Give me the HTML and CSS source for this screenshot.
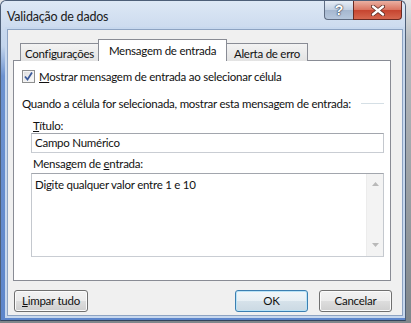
FILE: index.html
```html
<!DOCTYPE html>
<html lang="pt">
<head>
    <meta charset="UTF-8">
    <title>Validação de dados</title>
    <link rel="stylesheet" href="styles.css">
</head>
<body>
<div class="window">
    <div class="titlebar">
        <span class="title">Validação de dados</span>
        <div class="caption">
            <div class="cap-help">?</div>
            <div class="cap-close">
                <svg width="14" height="11" viewBox="0 0 14 11">
                    <path d="M2 1.5 L12 9.5 M12 1.5 L2 9.5" stroke="#5a2a22" stroke-width="4" stroke-linecap="round"/>
                    <path d="M2 1.5 L12 9.5 M12 1.5 L2 9.5" stroke="#fff" stroke-width="2.4" stroke-linecap="round"/>
                </svg>
            </div>
        </div>
    </div>
    <div class="client">
        <div class="tabs">
            <div class="tab tab-1">Configurações</div>
            <div class="tab tab-2 active">Mensagem de entrada</div>
            <div class="tab tab-3">Alerta de erro</div>
        </div>
        <div class="panel">
            <div class="check">
                <span class="box">
                    <svg width="11" height="11" viewBox="0 0 11 11">
                        <path d="M2 5.5 L4.5 8.5 L9 1.5" fill="none" stroke="#3b5a9a" stroke-width="1.8"/>
                    </svg>
                </span>
                <span><u>M</u>ostrar mensagem de entrada ao selecionar célula</span>
            </div>
            <div class="group-title">
                <span>Quando a célula for selecionada, mostrar esta mensagem de entrada:</span>
                <span class="rule"></span>
            </div>
            <div class="field-label"><u>T</u>ítulo:</div>
            <div class="input">Campo Numérico</div>
            <div class="field-label label-2">Mensagem de <u>e</u>ntrada:</div>
            <div class="textarea">
                <div class="ta-text">Digite qualquer valor entre 1 e 10</div>
                <div class="scroll">
                    <svg width="7" height="4" viewBox="0 0 7 4"><path d="M0 4 L3.5 0 L7 4 Z" fill="#b9b9b9"/></svg>
                    <svg width="7" height="4" viewBox="0 0 7 4"><path d="M0 0 L3.5 4 L7 0 Z" fill="#b9b9b9"/></svg>
                </div>
            </div>
        </div>
        <div class="buttons">
            <div class="btn btn-clear"><u>L</u>impar tudo</div>
            <div class="btn btn-ok">OK</div>
            <div class="btn">Cancelar</div>
        </div>
    </div>
</div>
</body>
</html>
```

FILE: styles.css
```css
*{
    box-sizing: border-box;
}
body{
    margin: 0;
    width: 411px;
    height: 323px;
    overflow: hidden;
    background: linear-gradient(to bottom,#e4e6e8 0,#b9bdc1 40px,#7f868b 100%);
    font-family: Lato, "Liberation Sans", sans-serif;
    font-size: 11.5px;
    letter-spacing: -0.25px;
    color: #111;
    white-space: nowrap;
}
u{
    text-decoration: underline;
    text-underline-offset: 1px;
}
/*窗口外框*/
.window{
    width: 406px;
    height: 321px;
    padding: 0 5px 0 7px;
    border: 1px solid #4d5f78;
    border-bottom: 1px solid #33445c;
    border-radius: 6px 6px 0 0;
    background: linear-gradient(to bottom,#d4e2f3 0,#c3d5ec 45px,#6c92d0 75px,#5d86cb 100%);
}
.titlebar{
    display: flex;
    align-items: flex-start;
    height: 29px;
    margin: 0 -5px 0 -7px;
    padding-left: 6px;
    border-radius: 6px 6px 0 0;
    background: linear-gradient(to bottom,#dde8f5,#cbdaee);
}
.title{
    margin-top: 8px;
    font-size: 12.5px;
    letter-spacing: -0.2px;
    color: #1b1b1b;
}
.caption{
    display: flex;
    margin-left: auto;
    margin-right: 3px;
}
.cap-help{
    width: 29px;
    height: 19px;
    border: 1px solid #5f6d83;
    border-top: none;
    border-right: none;
    border-radius: 0 0 0 4px;
    background: linear-gradient(to bottom,#e6edf6 0,#c2d0e2 50%,#a5b7cf 51%,#b6c7dc 100%);
    color: #fff;
    font-family: "Liberation Sans", sans-serif;
    font-weight: bold;
    font-size: 14px;
    letter-spacing: 0;
    line-height: 18px;
    text-align: center;
    text-shadow: 0 0 1px #3b4657,0 0 1px #3b4657,0 0 2px #3b4657;
}
.cap-close{
    display: flex;
    align-items: center;
    justify-content: center;
    width: 49px;
    height: 19px;
    border: 1px solid #6a2a22;
    border-top: none;
    border-radius: 0 0 4px 0;
    background: linear-gradient(to bottom,#eab0a2 0,#d9735f 50%,#c6442f 51%,#d5674f 100%);
}
/*客户区*/
.client{
    display: flex;
    flex-direction: column;
    width: 394px;
    height: 285px;
    background: #f0f0f0;
    box-shadow: 0 0 0 1px #8da3c2,0 0 0 3px #c7d8ee;
}
.tabs{
    display: flex;
    align-items: flex-end;
    height: 30px;
    padding-left: 12px;
}
.tab{
    position: relative;
    height: 18px;
    margin-bottom: -1px;
    padding-top: 2px;
    border: 1px solid #898c95;
    border-bottom: none;
    background: linear-gradient(to bottom,#f3f3f3,#e3e3e3);
    text-align: center;
    line-height: 15px;
}
.tab-1{
    width: 79px;
}
.tab-2{
    width: 129px;
    margin-left: -1px;
}
.tab-3{
    width: 82px;
    margin-left: -1px;
}
.tab.active{
    z-index: 1;
    height: 22px;
    padding-top: 3px;
    background: #fff;
}
.panel{
    display: flex;
    flex-direction: column;
    width: 378px;
    height: 221px;
    margin-left: 5px;
    padding: 0 6px 0 8px;
    border: 1px solid #898c95;
    background: #fff;
}
.check{
    display: flex;
    align-items: center;
    height: 15px;
    margin-top: 8px;
}
.box{
    display: flex;
    align-items: center;
    justify-content: center;
    width: 13px;
    height: 13px;
    margin-right: 4px;
    border: 1px solid #8e8f8f;
    background: linear-gradient(135deg,#dcdcdc,#fdfdfd);
    box-shadow: inset 0 0 0 1px #f4f4f4;
}
.group-title{
    display: flex;
    align-items: center;
    height: 15px;
    margin-top: 12px;
}
.rule{
    flex: 1;
    height: 1px;
    margin-left: 10px;
    background: #d5dfe5;
}
.field-label{
    height: 15px;
    margin-top: 7px;
    margin-left: 11px;
    line-height: 15px;
}
.label-2{
    margin-top: 3px;
}
.input{
    width: 353px;
    height: 20px;
    margin-left: 9px;
    padding-left: 3px;
    border: 1px solid #a9adb3;
    border-color: #a2a6ad #c4c8ce #c9cdd3 #c4c8ce;
    line-height: 18px;
}
.textarea{
    display: flex;
    width: 353px;
    height: 84px;
    margin-top: 2px;
    margin-left: 9px;
    border: 1px solid #a9adb3;
    border-color: #a2a6ad #c4c8ce #c9cdd3 #c4c8ce;
}
.ta-text{
    flex: 1;
    padding: 3px 3px;
    line-height: 15px;
}
.scroll{
    display: flex;
    flex-direction: column;
    align-items: center;
    justify-content: space-between;
    width: 17px;
    padding: 8px 0 9px;
    border-left: 1px solid #ececec;
    background: #f3f3f3;
}
/*底部按钮*/
.buttons{
    display: flex;
    gap: 11px;
    margin-top: 9px;
    padding: 0 10px 0 6px;
}
.btn{
    width: 73px;
    height: 22px;
    border: 1px solid #707070;
    border-radius: 3px;
    background: linear-gradient(to bottom,#f2f2f2 0,#ebebeb 50%,#dddddd 51%,#cfcfcf 100%);
    box-shadow: inset 0 0 0 1px #fbfbfb;
    text-align: center;
    line-height: 20px;
}
.btn-clear{
    width: 74px;
    margin-right: auto;
}
.btn-ok{
    border-color: #3c7fb1;
    background: linear-gradient(to bottom,#f1f6f9 0,#e7eff4 50%,#d6e2ea 51%,#cbd9e3 100%);
    box-shadow: inset 0 0 0 1px #b9e3f7;
}
```
